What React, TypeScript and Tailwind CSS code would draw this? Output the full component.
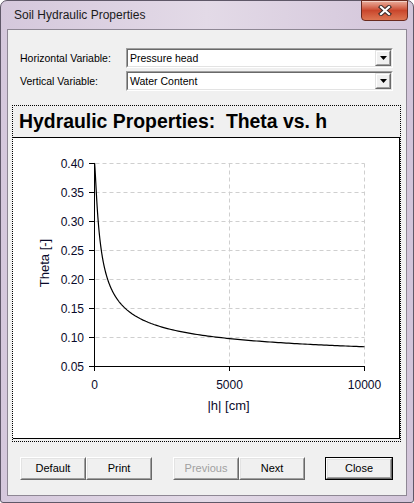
import clsx from "clsx";

// plot geometry, in page pixels (the svg viewBox uses page coordinates)
const X_AXIS_LEFT = 94.5;
const X_AXIS_RIGHT = 364.5;
const H_MAX = 10000;
const Y_AXIS_BOTTOM = 366.5;
const PX_PER_STEP = 29.07; // one 0.05 step of theta

const Y_TICKS = [0.05, 0.1, 0.15, 0.2, 0.25, 0.3, 0.35, 0.4];
const X_TICKS = [0, 5000, 10000];

function xOf(h: number): number {
  return X_AXIS_LEFT + (h / H_MAX) * (X_AXIS_RIGHT - X_AXIS_LEFT);
}

function yOf(theta: number): number {
  const raw = Y_AXIS_BOTTOM - ((theta - 0.05) / 0.05) * PX_PER_STEP;
  return Math.round(raw - 0.5) + 0.5;
}

// van Genuchten retention curve, fitted by eye to the plot
function thetaOf(h: number): number {
  return 0.05 + 0.35 / Math.pow(1 + Math.pow(0.0106 * h, 1.5), 1 / 3);
}

function buildCurvePath(): string {
  const samples: number[] = [];
  for (let h = 0; h < 200; h += 2) samples.push(h);
  for (let h = 200; h < 1000; h += 10) samples.push(h);
  for (let h = 1000; h <= H_MAX; h += 100) samples.push(h);

  return samples
    .map((h, index) => {
      const x = xOf(h);
      const y = Y_AXIS_BOTTOM - ((thetaOf(h) - 0.05) / 0.05) * PX_PER_STEP;
      return `${index === 0 ? "M" : "L"}${x.toFixed(2)} ${y.toFixed(2)}`;
    })
    .join(" ");
}

function DropButton() {
  return (
    <div className="h-[16px] w-[16px] border border-t-[#e3e3e3] border-l-[#e3e3e3] border-b-[#696969] border-r-[#696969]">
      <div className="flex h-full w-full items-center justify-center border border-t-white border-l-white border-b-[#a0a0a0] border-r-[#a0a0a0] bg-[#f0f0f0]">
        <svg width="7" height="4" viewBox="0 0 7 4" aria-hidden="true">
          <polygon points="0,0 7,0 3.5,4" fill="#000" />
        </svg>
      </div>
    </div>
  );
}

function ComboBox({ value }: { value: string }) {
  return (
    <div className="h-[20px] w-[267px] border border-t-[#a0a0a0] border-l-[#a0a0a0] border-b-white border-r-white">
      <div className="flex h-full w-full items-center border border-t-[#696969] border-l-[#696969] border-b-[#e3e3e3] border-r-[#e3e3e3] bg-white">
        <span className="flex-1 pl-[2px] text-[10.5px] leading-none text-black">{value}</span>
        <DropButton />
      </div>
    </div>
  );
}

function VariableRow({ label, value, className }: { label: string; value: string; className?: string }) {
  return (
    <div className={clsx("flex items-center pl-[12px]", className)}>
      <span className="w-[106px] text-[10.5px] leading-none text-black">{label}</span>
      <ComboBox value={value} />
    </div>
  );
}

type DialogButtonProps = {
  label: string;
  width: string;
  disabled?: boolean;
  isDefault?: boolean;
  className?: string;
};

function DialogButton({ label, width, disabled, isDefault, className }: DialogButtonProps) {
  return (
    <div className={clsx("h-[23px]", width, isDefault && "border border-black", className)}>
      <div className="h-full w-full border border-t-white border-l-white border-b-[#696969] border-r-[#696969]">
        <div className="flex h-full w-full items-center justify-center border border-t-[#e3e3e3] border-l-[#e3e3e3] border-b-[#a0a0a0] border-r-[#a0a0a0] bg-[#f0f0f0]">
          <span className={clsx("text-[11px] leading-none", disabled ? "text-[#a0a0a0]" : "text-black")}>{label}</span>
        </div>
      </div>
    </div>
  );
}

function ThetaChart() {
  const curve = buildCurvePath();
  const topY = yOf(0.4);

  return (
    <svg width="386" height="300" viewBox="13 138 386 300" className="block font-['Liberation_Sans',Arial,sans-serif]">
      <rect x="13" y="138" width="386" height="300" fill="#fff" />

      {Y_TICKS.filter((v) => v > 0.06).map((v) => (
        <line key={`gy-${v}`} x1={X_AXIS_LEFT + 1} x2={X_AXIS_RIGHT} y1={yOf(v)} y2={yOf(v)} stroke="#cfcfcf" strokeDasharray="4 3" />
      ))}
      {X_TICKS.filter((h) => h > 0).map((h) => (
        <line key={`gx-${h}`} x1={xOf(h)} x2={xOf(h)} y1={topY} y2={Y_AXIS_BOTTOM} stroke="#cfcfcf" strokeDasharray="4 3" />
      ))}

      <line x1={X_AXIS_LEFT} x2={X_AXIS_LEFT} y1={topY} y2={Y_AXIS_BOTTOM + 0.5} stroke="#000" />
      <line x1={X_AXIS_LEFT} x2={X_AXIS_RIGHT + 0.5} y1={Y_AXIS_BOTTOM} y2={Y_AXIS_BOTTOM} stroke="#000" />

      {Y_TICKS.map((v) => (
        <g key={`ty-${v}`}>
          <line x1="89" x2={X_AXIS_LEFT} y1={yOf(v)} y2={yOf(v)} stroke="#000" />
          <text x="84" y={yOf(v) + 4.5} fontSize="12" textAnchor="end" fill="#0a0a2a">
            {v.toFixed(2)}
          </text>
        </g>
      ))}
      {X_TICKS.map((h) => (
        <g key={`tx-${h}`}>
          <line x1={xOf(h)} x2={xOf(h)} y1="366" y2="371" stroke="#000" />
          <text x={xOf(h)} y="388.5" fontSize="12" textAnchor="middle" fill="#0a0a2a">
            {h}
          </text>
        </g>
      ))}

      <path d={curve} fill="none" stroke="#000" strokeWidth="1.2" />

      <text x="228.5" y="410" fontSize="13" textAnchor="middle" fill="#0a0a2a">
        |h| [cm]
      </text>
      <text x="48.5" y="263" fontSize="13" textAnchor="middle" fill="#0a0a2a" transform="rotate(-90 48.5 263)">
        Theta [-]
      </text>
    </svg>
  );
}

function CloseGlyph() {
  return (
    <svg width="14" height="11" viewBox="0 0 14 11" aria-hidden="true">
      <path d="M3 2 L11 9 M11 2 L3 9" stroke="#3a2a28" strokeWidth="4.2" strokeLinecap="square" fill="none" />
      <path d="M3 2 L11 9 M11 2 L3 9" stroke="#fff" strokeWidth="2.2" strokeLinecap="square" fill="none" />
    </svg>
  );
}

export default function App() {
  return (
    <div className="h-[503px] w-[414px] bg-white font-['Liberation_Sans',Arial,sans-serif]">
      <div className="relative flex h-full w-full flex-col rounded-t-[7px] rounded-b-[3px] border border-[#5f5868] bg-gradient-to-r from-[#d5c8dc] via-[#e3dae7] to-[#d3c5da] px-[6px] pb-[6px]">
        <div className="flex h-[28px] items-center pl-[7px]">
          <span className="text-[12px] leading-none text-[#1b1b1b]">Soil Hydraulic Properties</span>
        </div>

        <div className="absolute right-[5px] top-[-1px] flex h-[21px] w-[47px] items-center justify-center rounded-b-[4px] border border-[#6a2a1f] bg-gradient-to-b from-[#e9ad9c] via-[#c9462c] to-[#dd7552] shadow-[inset_0_1px_0_rgba(255,255,255,0.45)]">
          <CloseGlyph />
        </div>

        <div className="flex flex-1 flex-col border border-[#8e8794] bg-[#f0f0f0]">
          <VariableRow label="Horizontal Variable:" value="Pressure head" className="mt-[18px]" />
          <VariableRow label="Vertical Variable:" value="Water Content" className="mt-[3px]" />

          <div className="ml-[4px] mt-[14px] flex h-[337px] w-[389px] flex-col border border-dotted border-black">
            <div className="flex h-[31px] items-center bg-[#f0f0f0] pl-[6px]">
              <span className="whitespace-pre text-[19.4px] font-bold leading-none text-black">
                Hydraulic Properties:  Theta vs. h
              </span>
            </div>
            <div className="border-y border-r border-black bg-white">
              <ThetaChart />
            </div>
          </div>

          <div className="mt-[15px] flex pl-[12px]">
            <DialogButton label="Default" width="w-[66px]" />
            <DialogButton label="Print" width="w-[66px]" />
            <DialogButton label="Previous" width="w-[66px]" disabled className="ml-[21px]" />
            <DialogButton label="Next" width="w-[66px]" />
            <DialogButton label="Close" width="w-[68px]" isDefault className="ml-[20px]" />
          </div>
        </div>
      </div>
    </div>
  );
}
